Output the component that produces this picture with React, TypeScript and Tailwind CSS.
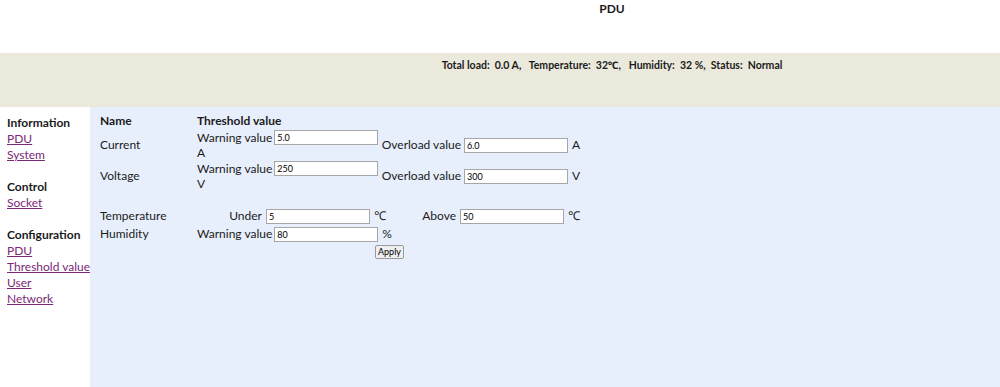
import React from 'react';

const font = { fontFamily: 'Lato, "Noto Sans", Arial, sans-serif' };

function Field({ value, className = '' }: { value: string; className?: string }) {
  return (
    <input
      readOnly
      value={value}
      className={`w-[104px] h-[15px] shrink-0 border border-[#a6a6a6] bg-white px-[2px] text-[9px] leading-[13px] text-black outline-none ${className}`}
    />
  );
}

const link = 'block h-[16px] leading-[16px] underline whitespace-nowrap text-[#7a2877]';

export default function App() {
  return (
    <div className="w-[1000px] h-[387px] overflow-hidden bg-white text-[12px] text-[#1b1b1b] whitespace-nowrap" style={font}>
      <div className="h-[53px] flex justify-center pl-[224px]">
        <div className="pt-[1px] font-bold text-[12px] leading-[16px]">PDU</div>
      </div>

      <div className="h-[54px] bg-[#ebe8dc] flex justify-center pl-[224px]">
        <div className="pt-[4px] font-bold text-[10.5px] leading-[16px] whitespace-pre">
          {'Total load:  0.0 A,   Temperature:  32℃,   Humidity:  32 %,  Status:  Normal'}
        </div>
      </div>

      <div className="flex h-[280px]">
        <div className="w-[90px] shrink-0 pt-[8px] pl-[7px] leading-[16px]">
          <div className="font-bold h-[16px]">Information</div>
          <a className={link}>PDU</a>
          <a className={link}>System</a>
          <div className="h-[16px]" />
          <div className="font-bold h-[16px]">Control</div>
          <a className={link}>Socket</a>
          <div className="h-[16px]" />
          <div className="font-bold h-[16px]">Configuration</div>
          <a className={link}>PDU</a>
          <a className={link}>Threshold value</a>
          <a className={link}>User</a>
          <a className={link}>Network</a>
        </div>

        <div className="flex-1 bg-[#e8effc] pt-[6px] pl-[10px]">
          <div className="flex h-[16px] items-center font-bold">
            <div className="w-[97px]">Name</div>
            <div>Threshold value</div>
          </div>

          <div className="mt-[1px] flex h-[30px] items-center">
            <div className="w-[97px]">Current</div>
            <div className="w-[191px] leading-[15px]">
              <div className="flex items-center h-[15px]">
                <span className="mr-[2px]">Warning value</span>
                <Field value="5.0" />
              </div>
              <div className="h-[15px]">A</div>
            </div>
            <div className="w-[192px] flex items-center justify-end">
              <span className="mr-[3px]">Overload value</span>
              <Field value="6.0" />
              <span className="ml-[4px] w-[8px]">A</span>
            </div>
          </div>

          <div className="mt-[1px] flex h-[30px] items-center">
            <div className="w-[97px]">Voltage</div>
            <div className="w-[191px] leading-[15px]">
              <div className="flex items-center h-[15px]">
                <span className="mr-[2px]">Warning value</span>
                <Field value="250" />
              </div>
              <div className="h-[15px]">V</div>
            </div>
            <div className="w-[192px] flex items-center justify-end">
              <span className="mr-[3px]">Overload value</span>
              <Field value="300" />
              <span className="ml-[4px] w-[8px]">V</span>
            </div>
          </div>

          <div className="h-[17px]" />

          <div className="flex h-[16px] items-center">
            <div className="w-[97px]">Temperature</div>
            <div className="w-[191px] flex items-center justify-end pr-[4px]">
              <span className="mr-[4px]">Under</span>
              <Field value="5" />
              <span className="ml-[4px] w-[10px]">℃</span>
            </div>
            <div className="w-[192px] flex items-center justify-end pr-[2px]">
              <span className="mr-[4px]">Above</span>
              <Field value="50" />
              <span className="ml-[4px] w-[10px]">℃</span>
            </div>
          </div>

          <div className="mt-[2px] flex h-[16px] items-center">
            <div className="w-[97px]">Humidity</div>
            <div className="flex items-center">
              <span className="mr-[2px]">Warning value</span>
              <Field value="80" />
              <span className="ml-[4px]">%</span>
            </div>
          </div>

          <div className="pl-[275px]">
            <button className="h-[14px] px-[2px] border border-[#9a9a9a] rounded-[2px] bg-[#efefef] text-[9px] leading-[12px] text-black">
              Apply
            </button>
          </div>
        </div>
      </div>
    </div>
  );
}
